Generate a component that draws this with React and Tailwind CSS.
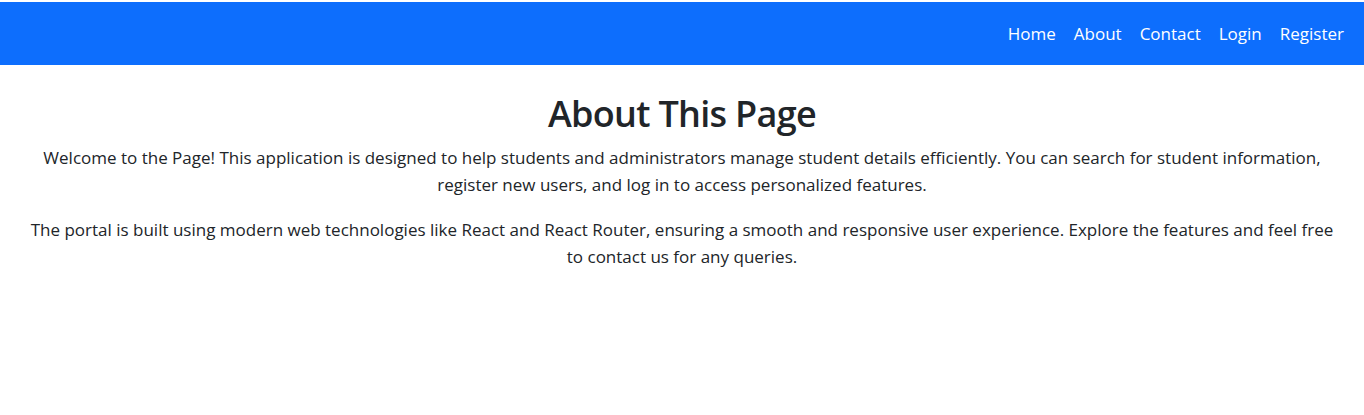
export default function App() {
  return (
    <div className="min-h-[415px] bg-white pt-[2px] text-[#212529]" style={{ fontFamily: '"Open Sans", "Noto Sans", sans-serif' }}>
      <nav className="h-[63px] w-full bg-[#0d6efd] flex items-center justify-end pl-[13px] pr-[11px]">
        <ul className="flex items-center text-[17px] text-white">
          {["Home", "About", "Contact", "Login", "Register"].map((t) => (
            <li key={t} className="px-[9px] leading-[27px]">{t}</li>
          ))}
        </ul>
      </nav>
      <main className="px-[13px] pt-[27px] text-center">
        <h1 className="text-[36px] font-semibold tracking-[-0.7px] leading-[43px] mb-[9px]">About This Page</h1>
        <p className="text-[17px] leading-[27px] mb-[18px]">
          Welcome to the Page! This application is designed to help students and administrators manage student details efficiently. You can search for student information,<br />
          register new users, and log in to access personalized features.
        </p>
        <p className="text-[17px] leading-[27px] mb-[18px]">
          The portal is built using modern web technologies like React and React Router, ensuring a smooth and responsive user experience. Explore the features and feel free<br />
          to contact us for any queries.
        </p>
      </main>
    </div>
  );
}
